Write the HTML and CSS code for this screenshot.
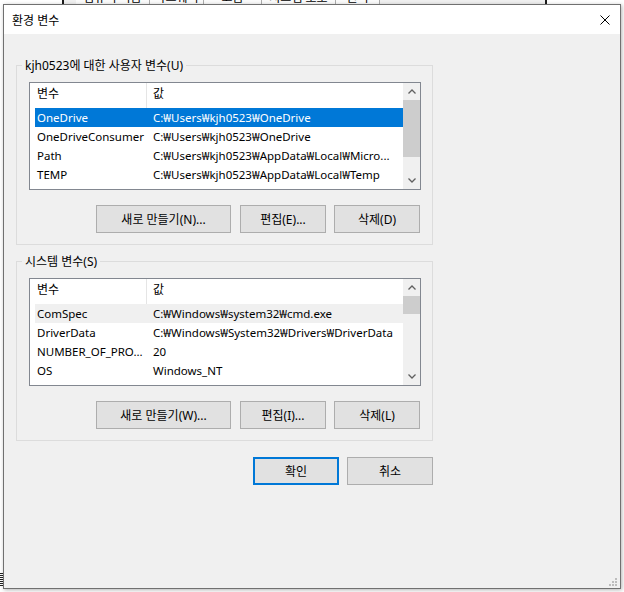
FILE: index.html
```html
<!DOCTYPE html>
<html lang="ko">
<head>
  <meta charset="UTF-8">
  <title>환경 변수</title>
  <link rel="stylesheet" href="styles.css">
</head>
<body>
  <div class="desktop">
    <!-- window behind the dialog -->
    <div class="back-window">
      <div class="tabs">
        <span class="tab" style="width:74px">컴퓨터 이름</span>
        <span class="tab" style="width:54px">하드웨어</span>
        <span class="tab" style="width:58px">고급</span>
        <span class="tab" style="width:74px">시스템 보호</span>
        <span class="tab" style="width:44px">원격</span>
      </div>
    </div>
    <div class="back-edge"></div>

    <div class="dialog">
      <div class="titlebar">
        <span class="title">환경 변수</span>
        <svg class="close" width="10" height="10" viewBox="0 0 10 10">
          <path d="M0.5 0.5 L9.5 9.5 M9.5 0.5 L0.5 9.5" stroke="#000" stroke-width="1" fill="none"/>
        </svg>
      </div>

      <div class="content">
        <fieldset class="group">
          <legend>kjh0523에 대한 사용자 변수(U)</legend>
          <div class="list">
            <div class="list-main">
              <div class="list-header">
                <span class="cell-name">변수</span>
                <span class="cell-value">값</span>
              </div>
              <div class="row selected">
                <span class="cell-name">OneDrive</span>
                <span class="cell-value">C:₩Users₩kjh0523₩OneDrive</span>
              </div>
              <div class="row">
                <span class="cell-name">OneDriveConsumer</span>
                <span class="cell-value">C:₩Users₩kjh0523₩OneDrive</span>
              </div>
              <div class="row">
                <span class="cell-name">Path</span>
                <span class="cell-value">C:₩Users₩kjh0523₩AppData₩Local₩Micro...</span>
              </div>
              <div class="row">
                <span class="cell-name">TEMP</span>
                <span class="cell-value">C:₩Users₩kjh0523₩AppData₩Local₩Temp</span>
              </div>
              <div class="row">
                <span class="cell-name">TMP</span>
                <span class="cell-value">C:₩Users₩kjh0523₩AppData₩Local₩Temp</span>
              </div>
            </div>
            <div class="scrollbar">
              <div class="sb-btn">
                <svg width="8" height="5" viewBox="0 0 8 5"><path d="M0.5 4.5 L4 1 L7.5 4.5" stroke="#606060" stroke-width="1.3" fill="none"/></svg>
              </div>
              <div class="sb-track">
                <div class="sb-thumb" style="height:57px"></div>
              </div>
              <div class="sb-btn">
                <svg width="8" height="5" viewBox="0 0 8 5"><path d="M0.5 0.5 L4 4 L7.5 0.5" stroke="#606060" stroke-width="1.3" fill="none"/></svg>
              </div>
            </div>
          </div>
          <div class="group-buttons">
            <button class="btn btn-wide">새로 만들기(N)...</button>
            <button class="btn">편집(E)...</button>
            <button class="btn">삭제(D)</button>
          </div>
        </fieldset>

        <fieldset class="group">
          <legend>시스템 변수(S)</legend>
          <div class="list">
            <div class="list-main">
              <div class="list-header">
                <span class="cell-name">변수</span>
                <span class="cell-value">값</span>
              </div>
              <div class="row inactive">
                <span class="cell-name">ComSpec</span>
                <span class="cell-value">C:₩Windows₩system32₩cmd.exe</span>
              </div>
              <div class="row">
                <span class="cell-name">DriverData</span>
                <span class="cell-value">C:₩Windows₩System32₩Drivers₩DriverData</span>
              </div>
              <div class="row">
                <span class="cell-name">NUMBER_OF_PRO...</span>
                <span class="cell-value">20</span>
              </div>
              <div class="row">
                <span class="cell-name">OS</span>
                <span class="cell-value">Windows_NT</span>
              </div>
              <div class="row">
                <span class="cell-name">Path</span>
                <span class="cell-value">C:₩Windows₩system32;C:₩Windows;C:₩...</span>
              </div>
            </div>
            <div class="scrollbar">
              <div class="sb-btn">
                <svg width="8" height="5" viewBox="0 0 8 5"><path d="M0.5 4.5 L4 1 L7.5 4.5" stroke="#606060" stroke-width="1.3" fill="none"/></svg>
              </div>
              <div class="sb-track">
                <div class="sb-thumb" style="height:18px"></div>
              </div>
              <div class="sb-btn">
                <svg width="8" height="5" viewBox="0 0 8 5"><path d="M0.5 0.5 L4 4 L7.5 0.5" stroke="#606060" stroke-width="1.3" fill="none"/></svg>
              </div>
            </div>
          </div>
          <div class="group-buttons">
            <button class="btn btn-wide">새로 만들기(W)...</button>
            <button class="btn">편집(I)...</button>
            <button class="btn">삭제(L)</button>
          </div>
        </fieldset>

        <div class="dialog-buttons">
          <button class="btn btn-default">확인</button>
          <button class="btn">취소</button>
        </div>
      </div>

      <svg class="grip" width="8" height="8" viewBox="0 0 8 8" fill="#bdbdbd">
        <rect x="6" y="0" width="2" height="2"/>
        <rect x="3" y="3" width="2" height="2"/>
        <rect x="6" y="3" width="2" height="2"/>
        <rect x="0" y="6" width="2" height="2"/>
        <rect x="3" y="6" width="2" height="2"/>
        <rect x="6" y="6" width="2" height="2"/>
      </svg>
    </div>
  </div>
</body>
</html>
```

FILE: styles.css
```css
* {
  box-sizing: border-box;
}

body {
  margin: 0;
  font-family: "Noto Sans", "Noto Sans CJK KR", sans-serif;
  font-size: 12px;
  color: #000;
  background: #fff;
}

.desktop {
  position: relative;
  width: 624px;
  height: 592px;
  overflow: hidden;
  background: #fff;
}

/* bits of the window behind */
.back-window {
  position: absolute;
  left: 62px;
  top: -30px;
  width: 485px;
  height: 40px;
  background: #f0f0f0;
  border-left: 2px solid #1b1b1b;
  border-right: 2px solid #1b1b1b;
}

.tabs {
  display: flex;
  margin: 19px 0 0 12px;
}

.tab {
  height: 18px;
  line-height: 18px;
  text-align: center;
  border-right: 1px solid #adadad;
  background: #fbfbfb;
  white-space: nowrap;
}

.back-edge {
  position: absolute;
  left: 0;
  top: 573px;
  width: 3px;
  height: 13px;
  background: repeating-linear-gradient(#222 0 1px, #fff 1px 2px);
}

/* dialog */
.dialog {
  position: absolute;
  left: 3px;
  top: 4px;
  width: 618px;
  height: 585px;
  border: 1px solid #707070;
  background: #f0f0f0;
  box-shadow: 1px 1px 4px rgba(0, 0, 0, 0.3);
}

.titlebar {
  height: 29px;
  background: #fff;
  display: flex;
  align-items: center;
  justify-content: space-between;
  padding: 0 10px 0 8px;
}

.content {
  padding: 24px 0 0 12px;
}

.group {
  width: 417px;
  margin: 0;
  border: 1px solid #dcdcdc;
  padding: 0 11px 11px 5px;
}

.group + .group {
  margin-top: 9px;
}

.group legend {
  padding: 0 3px;
  line-height: 15px;
}

.list {
  display: flex;
  width: 392px;
  height: 108px;
  margin: 9px 0 0 7px;
  border: 1px solid #828790;
  background: #fff;
}

.list-main {
  flex: 1;
  overflow: hidden;
}

.list-header {
  display: flex;
  height: 25px;
  line-height: 22px;
  padding-left: 5px;
}

.list-header .cell-name {
  border-right: 1px solid #e5e5e5;
}

.row {
  display: flex;
  height: 19px;
  line-height: 19px;
  margin-left: 5px;
  font-size: 11.5px;
}

.row.selected {
  background: #0078d7;
  color: #fff;
}

.row.inactive {
  background: #f0f0f0;
}

.cell-name {
  width: 112px;
  flex-shrink: 0;
  padding-left: 2px;
  white-space: nowrap;
  overflow: hidden;
}

.cell-value {
  flex: 1;
  padding: 0 4px 0 6px;
  white-space: nowrap;
  overflow: hidden;
  text-overflow: ellipsis;
}

.scrollbar {
  width: 17px;
  background: #f0f0f0;
  display: flex;
  flex-direction: column;
}

.sb-btn {
  height: 17px;
  display: flex;
  align-items: center;
  justify-content: center;
}

.sb-track {
  flex: 1;
}

.sb-thumb {
  background: #cdcdcd;
}

.group-buttons {
  display: flex;
  justify-content: flex-end;
  gap: 8px;
  margin: 15px 1px 0 0;
}

.btn {
  width: 86px;
  height: 28px;
  padding: 0;
  font-family: inherit;
  font-size: 12px;
  color: #000;
  background: #e1e1e1;
  border: 1px solid #adadad;
}

.btn-wide {
  width: 135px;
  margin-right: 1px;
}

.btn-default {
  border: 2px solid #0078d7;
}

.dialog-buttons {
  display: flex;
  justify-content: flex-end;
  gap: 8px;
  width: 417px;
  margin-top: 16px;
}

.grip {
  position: absolute;
  right: 3px;
  bottom: 2px;
}
```
